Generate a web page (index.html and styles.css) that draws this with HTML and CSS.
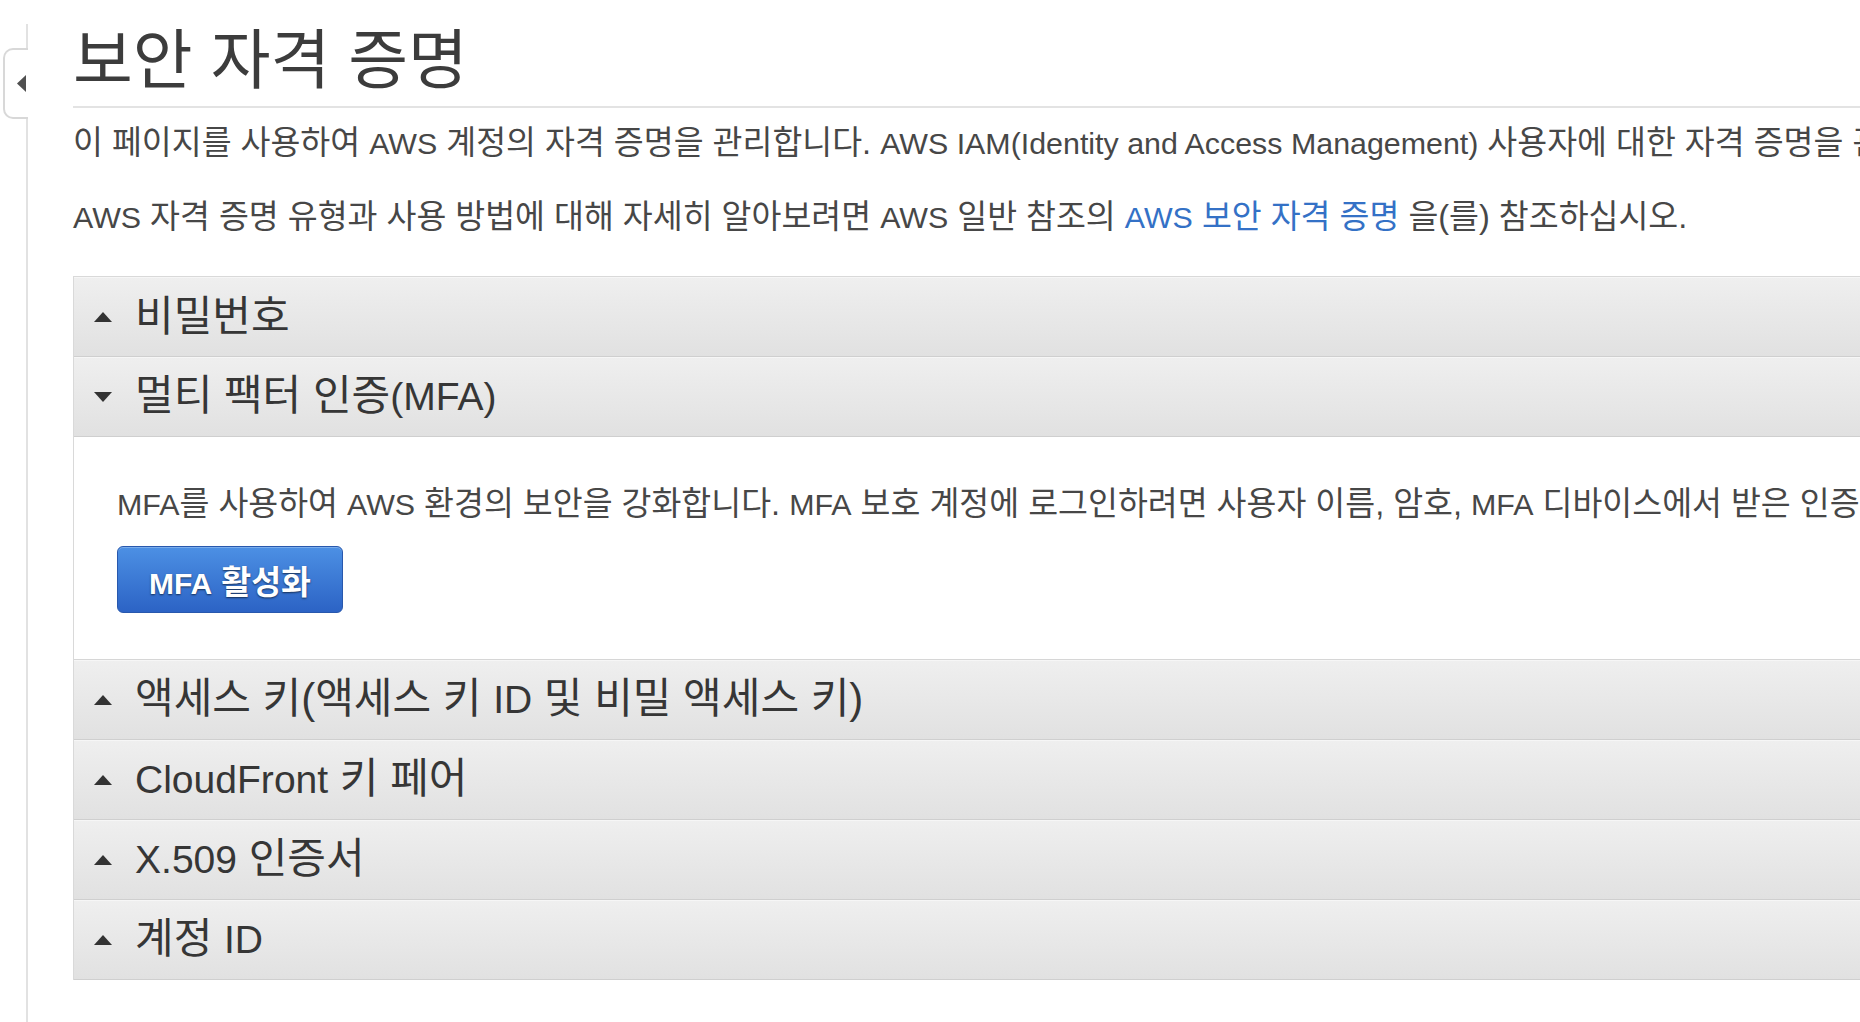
FILE: index.html
```html
<!DOCTYPE html>
<html lang="ko">
<head>
<meta charset="utf-8">
<title>보안 자격 증명</title>
<link rel="stylesheet" href="styles.css">
</head>
<body>
<div class="layout">
  <aside class="sidebar">
    <button class="collapse-tab" type="button" aria-label="사이드바 접기">
      <svg class="tab-arrow" width="9" height="17" viewBox="0 0 9 17"><polygon points="9,0 0,8.5 9,17"/></svg>
    </button>
  </aside>
  <main class="main">
    <h1 class="title">보안 자격 증명</h1>
    <p class="intro">이 페이지를 사용하여 <span class="en">AWS</span> 계정의 자격 증명을 관리합니다. <span class="en">AWS IAM(Identity and Access Management)</span> 사용자에 대한 자격 증명을 관리하려면 <span class="en">IAM</span> 콘솔을 사용하십시오.</p>
    <p class="intro"><span class="en">AWS</span> 자격 증명 유형과 사용 방법에 대해 자세히 알아보려면 <span class="en">AWS</span> 일반 참조의 <a class="link" href="#"><span class="en">AWS</span> 보안 자격 증명</a> 을(를) 참조하십시오.</p>

    <div class="accordion">
      <section class="panel">
        <div class="panel-header">
          <svg class="caret" width="18" height="10" viewBox="0 0 18 10"><polygon points="0,10 9,0 18,10"/></svg>
          <span class="panel-title">비밀번호</span>
        </div>
      </section>
      <section class="panel open">
        <div class="panel-header">
          <svg class="caret" width="18" height="10" viewBox="0 0 18 10"><polygon points="0,0 18,0 9,10"/></svg>
          <span class="panel-title">멀티 팩터 인증<span class="en">(MFA)</span></span>
        </div>
        <div class="panel-body">
          <p class="panel-text"><span class="en">MFA</span>를 사용하여 <span class="en">AWS</span> 환경의 보안을 강화합니다. <span class="en">MFA</span> 보호 계정에 로그인하려면 사용자 이름, 암호, <span class="en">MFA</span> 디바이스에서 받은 인증 코드가 필요합니다.</p>
          <button class="btn-primary" type="button"><span class="en">MFA</span> 활성화</button>
        </div>
      </section>
      <section class="panel">
        <div class="panel-header">
          <svg class="caret" width="18" height="10" viewBox="0 0 18 10"><polygon points="0,10 9,0 18,10"/></svg>
          <span class="panel-title">액세스 키(액세스 키 <span class="en">ID</span> 및 비밀 액세스 키)</span>
        </div>
      </section>
      <section class="panel">
        <div class="panel-header">
          <svg class="caret" width="18" height="10" viewBox="0 0 18 10"><polygon points="0,10 9,0 18,10"/></svg>
          <span class="panel-title"><span class="en">CloudFront</span> 키 페어</span>
        </div>
      </section>
      <section class="panel">
        <div class="panel-header">
          <svg class="caret" width="18" height="10" viewBox="0 0 18 10"><polygon points="0,10 9,0 18,10"/></svg>
          <span class="panel-title"><span class="en">X.509</span> 인증서</span>
        </div>
      </section>
      <section class="panel">
        <div class="panel-header">
          <svg class="caret" width="18" height="10" viewBox="0 0 18 10"><polygon points="0,10 9,0 18,10"/></svg>
          <span class="panel-title">계정 <span class="en">ID</span></span>
        </div>
      </section>
    </div>
  </main>
</div>
</body>
</html>
```

FILE: styles.css
```css
html, body {
  margin: 0;
  padding: 0;
  overflow: hidden;
  background: #ffffff;
}

body {
  font-family: "Liberation Sans", "Noto Sans CJK KR", Arial, sans-serif;
  color: #444444;
  width: 1860px;
  height: 1022px;
}

.layout {
  display: flex;
  align-items: flex-start;
  height: 1022px;
}

.sidebar {
  position: relative;
  flex: 0 0 26px;
  width: 26px;
  margin-top: 24px;
  height: 998px;
  border-right: 2px solid #e2e2e2;
}

.collapse-tab {
  position: absolute;
  top: 24px;
  left: 3px;
  width: 25px;
  height: 71px;
  margin: 0;
  padding: 0 2px 0 0;
  box-sizing: border-box;
  background: #ffffff;
  border: 2px solid #d8d8d8;
  border-right: none;
  border-radius: 10px 0 0 10px;
  display: flex;
  align-items: center;
  justify-content: flex-end;
  cursor: pointer;
}

.tab-arrow {
  display: block;
  fill: #505050;
}

.main {
  flex: 0 0 auto;
  width: 2400px;
  margin-left: 45px;
  padding-top: 21px;
}

.en {
  font-size: 0.935em;
}

.title {
  margin: 0;
  font-size: 65px;
  line-height: 80px;
  font-weight: normal;
  color: #3c3c3c;
  padding-bottom: 5px;
  border-bottom: 2px solid #e3e3e3;
}

.intro {
  margin: 0;
  font-size: 32.5px;
  line-height: 42px;
  color: #474747;
  white-space: nowrap;
}

.title + .intro {
  margin-top: 14px;
}

.intro + .intro {
  margin-top: 32px;
}

.link {
  color: #3471c6;
  text-decoration: none;
}

.accordion {
  margin-top: 38px;
  border: 1px solid #d9d9d9;
  border-bottom: none;
}

.panel-header {
  display: flex;
  align-items: center;
  gap: 23px;
  height: 79px;
  padding-left: 20px;
  border-bottom: 1px solid #cfcfcf;
  background: linear-gradient(#efefef, #e1e1e1);
  box-shadow: inset 0 1px 0 #f6f6f6;
}

.caret {
  display: block;
  flex: 0 0 18px;
  fill: #333333;
}

.panel-title {
  font-size: 42px;
  line-height: 44px;
  color: #363636;
  white-space: nowrap;
}

.panel-title .en {
  font-size: 0.93em;
}

.panel-body {
  background: #ffffff;
  padding: 46px 43px 46px;
  border-bottom: 1px solid #d6d6d6;
}

.panel-text {
  margin: 0;
  font-size: 32.5px;
  line-height: 42px;
  color: #474747;
  white-space: nowrap;
}

.btn-primary {
  display: block;
  margin-top: 21px;
  width: 226px;
  height: 67px;
  padding: 0;
  box-sizing: border-box;
  border: 1px solid #2858ad;
  border-radius: 6px;
  background: linear-gradient(#4c90e4, #2c63c5);
  color: #ffffff;
  font-family: "Liberation Sans", "Noto Sans CJK KR", Arial, sans-serif;
  font-size: 32.5px;
  font-weight: bold;
  text-shadow: 0 1px 2px rgba(0, 0, 0, 0.6);
  box-shadow: inset 0 1px 0 rgba(255, 255, 255, 0.25);
  cursor: pointer;
}

.btn-primary .en {
  font-size: 0.923em;
}
```
